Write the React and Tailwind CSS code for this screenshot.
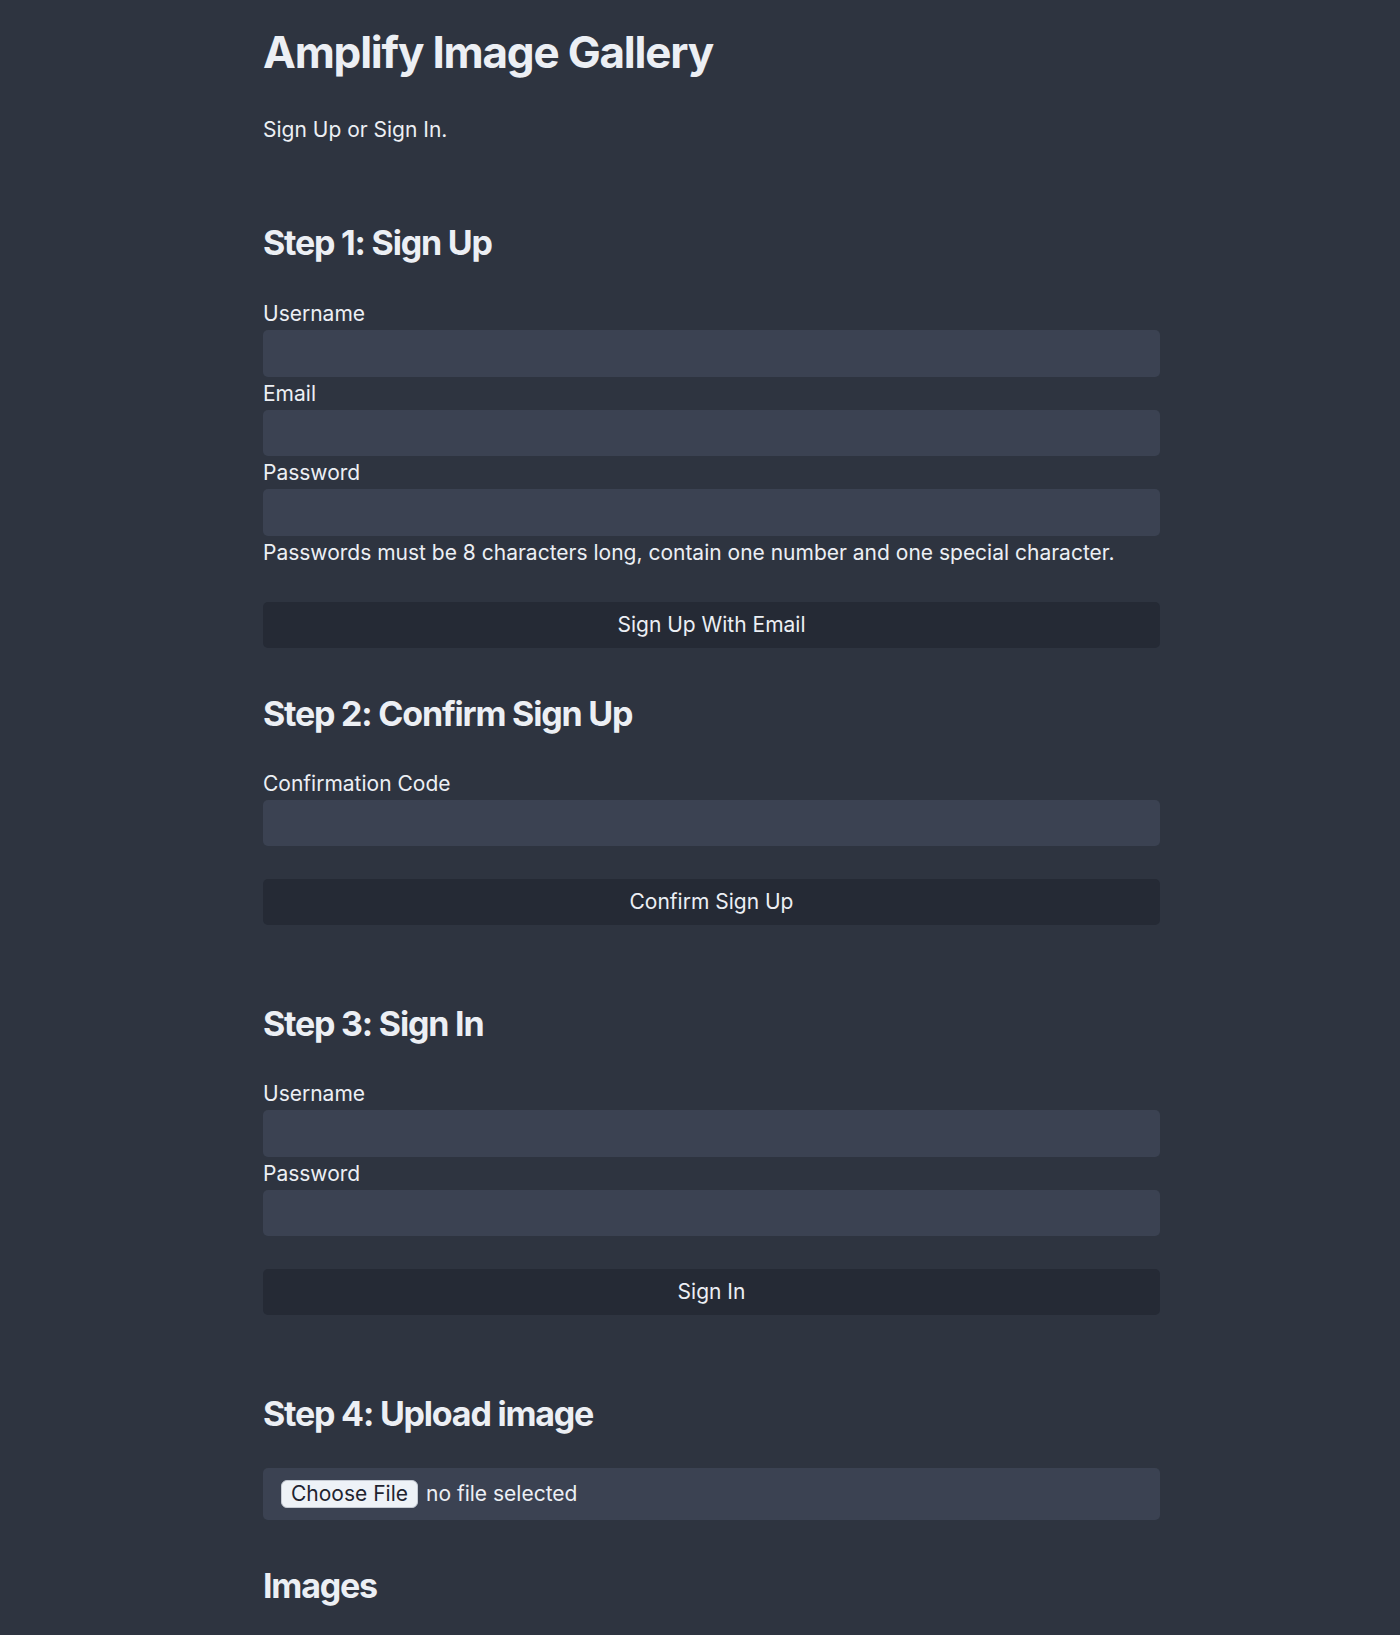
export default function App() {
  const font = { fontFamily: "Inter, 'Noto Sans', sans-serif" };
  const Label = ({ children }) => (
    <label className="block text-[21px] leading-[33px] text-[#eceff4]">{children}</label>
  );
  const Input = ({ type = "text" }) => (
    <input type={type} className="block w-full h-[46.5px] rounded-[5px] bg-[#3b4252] border-0 outline-none px-3 text-[21px] text-[#eceff4]" />
  );
  const Button = ({ children }) => (
    <button className="block w-full h-[46px] rounded-[5px] bg-[#252a35] text-[21px] text-[#eceff4]">{children}</button>
  );
  const H2 = ({ children }) => (
    <h2 className="text-[34px] leading-[41px] font-bold text-[#eceff4] tracking-[-1.2px]">{children}</h2>
  );
  return (
    <div className="min-h-[1635px] bg-[#2e3440] text-[#eceff4]" style={font}>
      <div className="ml-[263px] w-[897px] pt-[26px]">
        <h1 className="text-[44px] leading-[53px] font-bold tracking-[-1.2px]">Amplify Image Gallery</h1>
        <p className="mt-[34px] text-[21px] leading-[33px]">Sign Up or Sign In.</p>

        <div className="mt-[76px]">
          <H2>Step 1: Sign Up</H2>
          <div className="mt-[34px]">
            <Label>Username</Label>
            <Input />
            <Label>Email</Label>
            <Input type="email" />
            <Label>Password</Label>
            <Input type="password" />
            <p className="text-[21px] leading-[33px]">Passwords must be 8 characters long, contain one number and one special character.</p>
            <div className="mt-[33px]">
              <Button>Sign Up With Email</Button>
            </div>
          </div>
        </div>

        <div className="mt-[45px]">
          <H2>Step 2: Confirm Sign Up</H2>
          <div className="mt-[33px]">
            <Label>Confirmation Code</Label>
            <Input />
            <div className="mt-[33px]">
              <Button>Confirm Sign Up</Button>
            </div>
          </div>
        </div>

        <div className="mt-[78px]">
          <H2>Step 3: Sign In</H2>
          <div className="mt-[33px]">
            <Label>Username</Label>
            <Input />
            <Label>Password</Label>
            <Input type="password" />
            <div className="mt-[33px]">
              <Button>Sign In</Button>
            </div>
          </div>
        </div>

        <div className="mt-[78px]">
          <H2>Step 4: Upload image</H2>
          <div className="mt-[34px] h-[52px] rounded-[5px] bg-[#3b4252] flex items-center pl-[18px]">
            <span className="h-[28px] px-[9px] rounded-[6px] bg-[#eef2f7] border border-[#c5cad3] text-[#1f2430] text-[21px] leading-[26px]">Choose File</span>
            <span className="ml-[8px] text-[21px] text-[#eceff4]">no file selected</span>
          </div>
        </div>

        <div className="mt-[45px]">
          <H2>Images</H2>
        </div>
      </div>
    </div>
  );
}
